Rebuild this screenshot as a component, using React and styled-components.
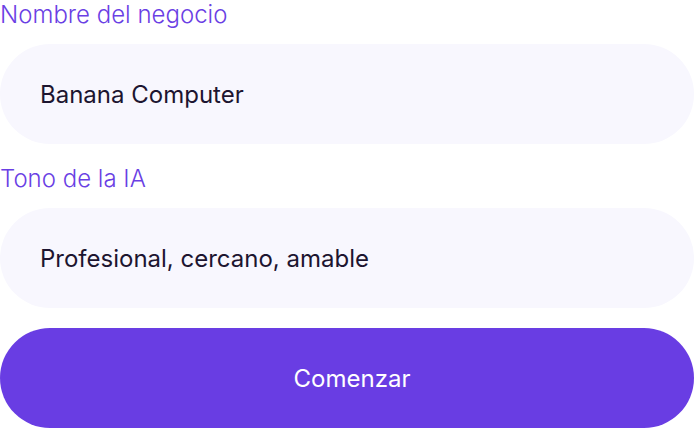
import React from "react"
import styled, { createGlobalStyle } from "styled-components"

const GlobalStyle = createGlobalStyle`
  html, body {
    margin: 0;
    padding: 0;
    background: #ffffff;
  }
  body {
    font-family: Inter, "Noto Sans", sans-serif;
  }
`

const Form = styled.form`
  display: flex;
  flex-direction: column;
  gap: 20px;
  width: 694px;
`

const Field = styled.label`
  display: flex;
  flex-direction: column;
  gap: 15px;
`

const FieldLabel = styled.span`
  font-size: 24px;
  font-weight: 300;
  line-height: 29px;
  color: #6a3fe4;
`

const Input = styled.input`
  box-sizing: border-box;
  height: 100px;
  width: 100%;
  border: none;
  outline: none;
  border-radius: 50px;
  padding: 0 40px;
  background: #f8f7fe;
  font-family: Inter, "Noto Sans", sans-serif;
  font-size: 24px;
  font-weight: 400;
  color: #1d1530;
`

const Button = styled.button`
  box-sizing: border-box;
  height: 100px;
  width: 100%;
  border: none;
  border-radius: 50px;
  padding: 0 0 0 10px;
  background: #693de3;
  color: #ffffff;
  font-family: Inter, "Noto Sans", sans-serif;
  font-size: 24px;
  font-weight: 400;
  cursor: pointer;
`

const App = () => {
  return (
    <>
      <GlobalStyle />
      <Form onSubmit={e => e.preventDefault()}>
        <Field>
          <FieldLabel>Nombre del negocio</FieldLabel>
          <Input defaultValue="Banana Computer" />
        </Field>
        <Field>
          <FieldLabel>Tono de la IA</FieldLabel>
          <Input defaultValue="Profesional, cercano, amable" />
        </Field>
        <Button type="submit">Comenzar</Button>
      </Form>
    </>
  )
}

export default App
